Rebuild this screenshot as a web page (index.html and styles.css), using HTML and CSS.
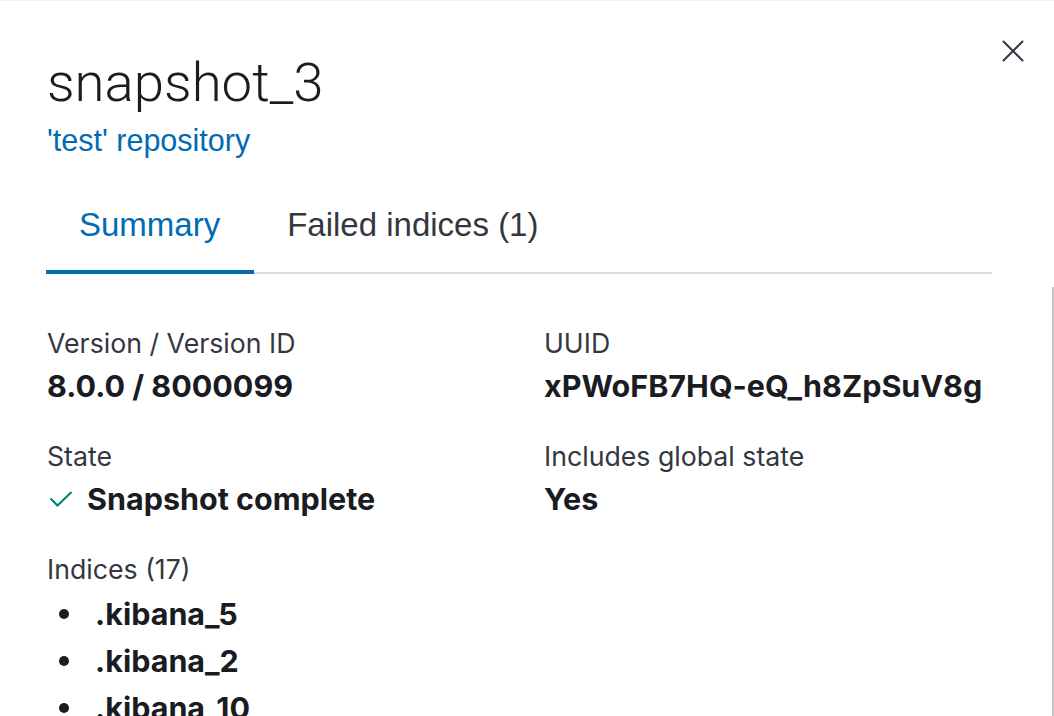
FILE: index.html
```html
<!DOCTYPE html>
<html lang="en">
<head>
<meta charset="utf-8">
<title>snapshot_3</title>
<link rel="stylesheet" href="styles.css">
</head>
<body>
<div class="flyout">
  <button class="close" aria-label="Close">
    <svg width="22" height="22" viewBox="0 0 22 22"><path d="M1.5 1.5 L20.5 20.5 M20.5 1.5 L1.5 20.5" stroke="#343741" stroke-width="2" stroke-linecap="round" fill="none"/></svg>
  </button>
  <header class="header">
    <h1 class="title">snapshot_3</h1>
    <a class="repo-link" href="#">'test' repository</a>
    <nav class="tabs">
      <button class="tab tab-active">Summary</button>
      <button class="tab">Failed indices (1)</button>
    </nav>
  </header>
  <main class="body">
    <dl class="details">
      <div class="item">
        <dt class="label">Version / Version ID</dt>
        <dd class="value">8.0.0 / 8000099</dd>
      </div>
      <div class="item">
        <dt class="label">UUID</dt>
        <dd class="value">xPWoFB7HQ-eQ_h8ZpSuV8g</dd>
      </div>
      <div class="item">
        <dt class="label">State</dt>
        <dd class="value state">
          <svg class="check" width="24" height="16" viewBox="0 0 24 16"><path d="M1.5 7.5 L8.5 14.5 L22.5 1" stroke="#017d73" stroke-width="2" fill="none"/></svg>
          Snapshot complete
        </dd>
      </div>
      <div class="item">
        <dt class="label">Includes global state</dt>
        <dd class="value">Yes</dd>
      </div>
      <div class="item">
        <dt class="label">Indices (17)</dt>
        <dd class="value">
          <ul class="indices">
            <li>.kibana_5</li>
            <li>.kibana_2</li>
            <li>.kibana_10</li>
          </ul>
        </dd>
      </div>
    </dl>
  </main>
  <div class="scrollbar"></div>
</div>
</body>
</html>
```

FILE: styles.css
```css
* { box-sizing: border-box; }
html, body {
  margin: 0;
  padding: 0;
  background: #ffffff;
  height: 100%;
  overflow: hidden;
}
.flyout {
  position: relative;
  height: 716px;
  overflow: hidden;
  border-top: 1px solid #f0f0f0;
  font-family: Inter, "Liberation Sans", sans-serif;
  color: #1a1c21;
}
.close {
  position: absolute;
  top: 29px;
  left: 992px;
  width: 42px;
  height: 42px;
  border: 0;
  background: transparent;
  padding: 0;
  display: flex;
  align-items: center;
  justify-content: center;
}
.header {
  padding: 51px 62px 0 46px;
}
.title {
  margin: 0;
  font-family: Roboto, "Liberation Sans", sans-serif;
  font-weight: 300;
  font-size: 54.5px;
  line-height: 60px;
  color: #1a1c21;
  padding-left: 1px;
}
.repo-link {
  display: block;
  margin-top: 10px;
  font-family: "Liberation Sans", Arial, sans-serif;
  font-size: 30.5px;
  line-height: 36px;
  color: #006bb4;
  text-decoration: none;
  padding-left: 1px;
}
.tabs {
  display: flex;
  margin-top: 42px;
  box-shadow: inset 0 -2px 0 #d3dae6;
}
.tab {
  font-family: "Liberation Sans", Arial, sans-serif;
  font-size: 33px;
  line-height: 48px;
  padding: 1px 34px 25px 33px;
  border: 0;
  background: transparent;
  color: #343741;
}
.tab-active {
  color: #006bb4;
  box-shadow: inset 0 -4px 0 #006bb4;
}
.body {
  padding: 50px 62px 0 46px;
}
.details {
  margin: 0;
  display: grid;
  grid-template-columns: 1fr 1fr;
  column-gap: 48px;
  row-gap: 29px;
}
.item { padding-left: 1px; }
.label {
  font-size: 26.7px;
  line-height: 38px;
  color: #343741;
  margin: 0;
}
.value {
  margin: 2px 0 0 0;
  font-size: 30.5px;
  font-weight: 700;
  line-height: 44px;
  color: #1a1c21;
}
.state {
  display: flex;
  align-items: center;
  gap: 14px;
}
.check { margin-left: 2px; flex: none; }
.indices {
  margin: 0;
  padding: 0 0 0 12px;
  list-style: none;
}
.indices li {
  display: flex;
  align-items: center;
  line-height: 47px;
}
.indices li::before {
  content: "";
  width: 10px;
  height: 10px;
  border-radius: 50%;
  background: #1a1c21;
  margin-right: 26px;
  flex: none;
}
.scrollbar {
  position: absolute;
  left: 1052px;
  top: 286px;
  width: 2px;
  height: 440px;
  background: #c4c4c4;
}
```
